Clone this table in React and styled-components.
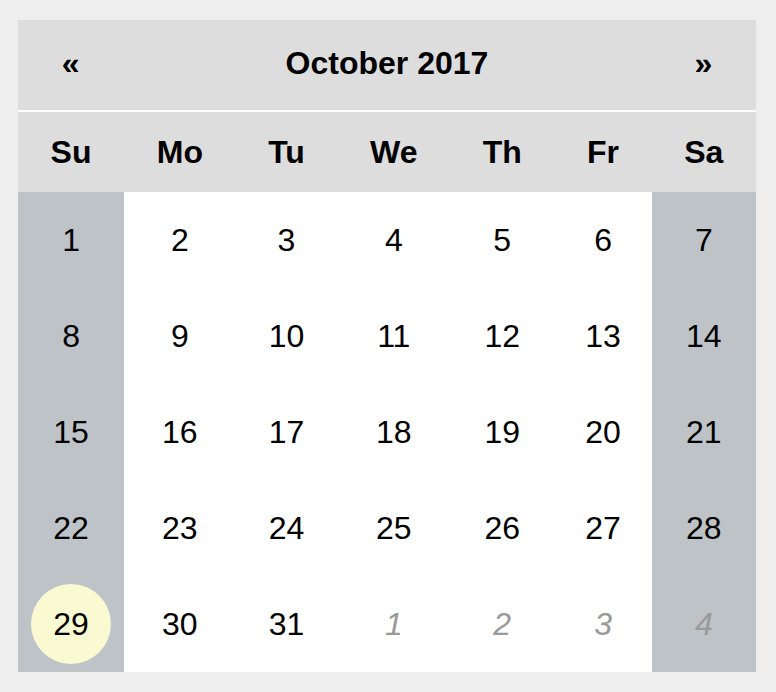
import React from 'react'
import styled, { createGlobalStyle } from 'styled-components'

const GlobalStyle = createGlobalStyle`
  html, body {
    margin: 0;
    padding: 0;
    background: #eeeeee;
    font-family: "Liberation Sans", Arial, Helvetica, sans-serif;
  }
`

let Page = styled.div`
  padding: 20px 20px 20px 18px;
`
let Calendar = styled.div`
  width: 738px;
  background: #ffffff;
`
let Header = styled.div`
  height: 90px;
  display: grid;
  grid-template-columns: repeat(7, 1fr);
  align-items: center;
  background: #dddddd;
  border-bottom: 2px solid #ffffff;
  font-size: 32px;
  font-weight: bold;
  color: #000;
`
let NavButton = styled.div`
  text-align: center;
  cursor: pointer;
  line-height: 1;
  margin-top: -4px;
`
let Title = styled.div`
  grid-column: 2 / span 5;
  text-align: center;
  margin-top: -4px;
`
/* columns sized like an auto table: header label width + equal share of the rest */
let Grid = styled.div`
  display: grid;
  grid-template-columns: repeat(7, auto);
`
let WeekDay = styled.div`
  height: 80px;
  display: flex;
  align-items: center;
  justify-content: center;
  background: #dddddd;
  font-size: 32px;
  font-weight: bold;
  color: #000;
`
let Day = styled.div`
  height: 96px;
  contain: inline-size;
  display: flex;
  align-items: center;
  justify-content: center;
  background: ${props => (props.weekend ? '#bec3c7' : '#ffffff')};
`
let DayNum = styled.div`
  flex: none;
  width: 80px;
  height: 80px;
  border-radius: 50%;
  display: flex;
  align-items: center;
  justify-content: center;
  font-size: 32px;
  font-style: ${props => (props.outside ? 'italic' : 'normal')};
  color: ${props => (props.outside ? '#999999' : '#000000')};
  background: ${props => (props.today ? '#fafad2' : 'transparent')};
`

const weekDays = ['Su', 'Mo', 'Tu', 'We', 'Th', 'Fr', 'Sa']

const days = []
for (let d = 1; d <= 31; d++) days.push({ n: d, outside: false })
for (let d = 1; d <= 4; d++) days.push({ n: d, outside: true })

export default function App() {
  return (
    <Page>
      <GlobalStyle />
      <Calendar>
        <Header>
          <NavButton>«</NavButton>
          <Title>October 2017</Title>
          <NavButton>»</NavButton>
        </Header>
        <Grid>
          {weekDays.map(w => (
            <WeekDay key={w}>{w}</WeekDay>
          ))}
          {days.map((d, i) => (
            <Day key={i} weekend={i % 7 === 0 || i % 7 === 6}>
              <DayNum outside={d.outside} today={!d.outside && d.n === 29}>
                {d.n}
              </DayNum>
            </Day>
          ))}
        </Grid>
      </Calendar>
    </Page>
  )
}
